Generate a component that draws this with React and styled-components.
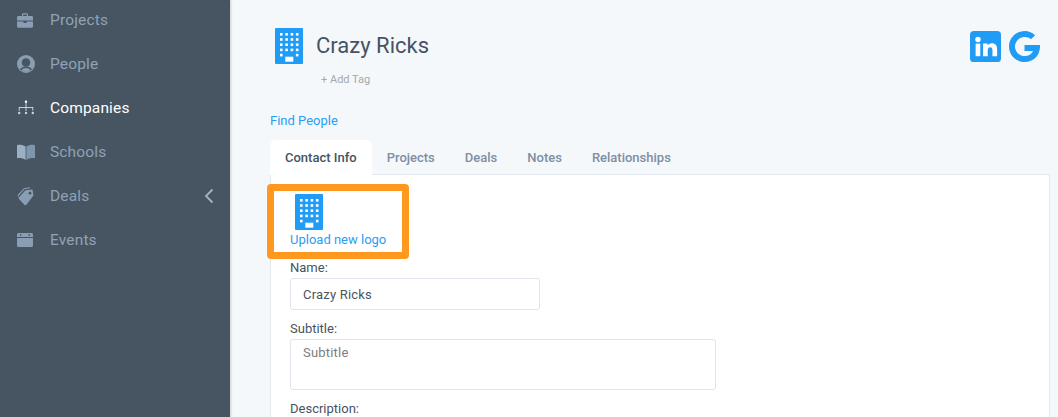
import React from "react";
import styled, { createGlobalStyle } from "styled-components";

const Global = createGlobalStyle`
  html, body { margin: 0; height: 100%; overflow: hidden; background: #f5f8fb; }
  #root { height: 100%; }
  * { box-sizing: border-box; }
`;
const Page = styled.div`
  display: flex; width: 1058px; height: 417px; overflow: hidden;
  font-family: Roboto, "Liberation Sans", sans-serif; position: relative; background: #f5f8fb;
`;
const Sidebar = styled.nav`
  flex: 0 0 230px; background: #475563; box-shadow: 1px 0 2px rgba(70,83,97,.25);
  display: flex; flex-direction: column; height: 417px; overflow: hidden;
`;
const NavList = styled.div`margin-top: -2px; display: flex; flex-direction: column;`;
const NavItem = styled.div`
  height: 44px; display: flex; align-items: center; padding: 0 16px 0 17px;
  font-size: 15.5px; letter-spacing: .15px; color: ${p => p.$active ? "#ffffff" : "#8fa2b6"};
`;
const NavIcon = styled.span`width: 33px; height: 20px; display: flex; align-items: center; flex: none;`;
const NavLabel = styled.span`flex: 1;`;
const Main = styled.main`flex: 1; padding: 28px 0 0 40px; min-width: 0;`;
const Header = styled.header`display: flex; justify-content: space-between; height: 85px; padding-right: 18px;`;
const HeaderLeft = styled.div`display: flex; padding-left: 5px; gap: 13px;`;
const TitleCol = styled.div`display: flex; flex-direction: column;`;
const Title = styled.h1`margin: 0; font-size: 22px; font-weight: 400; color: #465361; line-height: 36px;`;
const AddTag = styled.span`font-size: 11px; color: #a5a8ab; margin: 9px 0 0 5px; line-height: 14px;`;
const Social = styled.div`display: flex; gap: 8px; margin-top: 3px; align-items: flex-start;`;
const FindLink = styled.a`display: block; font-size: 13px; line-height: 16px; color: #2a9df4; margin-bottom: 11px;`;
const Tabs = styled.div`display: flex; height: 34px;`;
const Tab = styled.div`
  height: 35px; padding: 0 15px; display: flex; align-items: center; font-size: 13px; font-weight: 500;
  color: ${p => p.$active ? "#465361" : "#7d8fa3"};
  background: ${p => p.$active ? "#fff" : "transparent"};
  border-radius: 6px 6px 0 0; position: relative; z-index: 1;
`;
const Panel = styled.section`
  background: #fff; border: 1px solid #e3e8ef; border-bottom: 0; margin-right: 8px;
  padding: 19px 19px 0 19px; height: 260px;
`;
const LogoBlock = styled.div`display: flex; flex-direction: column; align-items: flex-start; gap: 2px; height: 66px;`;
const LogoIcon = styled.div`padding-left: 5px; height: 36px;`;
const Upload = styled.a`font-size: 13px; line-height: 16px; color: #2a9df4;`;
const Field = styled.div`display: flex; flex-direction: column; margin-bottom: 11px;`;
const Label = styled.label`font-size: 13px; line-height: 16px; color: #465361; margin-bottom: 2px;`;
const Input = styled.div`
  width: ${p => p.$wide ? "426px" : "250px"}; height: ${p => p.$wide ? "51px" : "32px"};
  border: 1px solid #e0e4ec; border-radius: 3px; padding: ${p => p.$wide ? "5px" : "1px"} 12px 0;
  display: flex; align-items: ${p => p.$wide ? "flex-start" : "center"};
  font-size: 13px; line-height: 16px; letter-spacing: .2px; color: ${p => p.$ph ? "#7d7d7d" : "#4d5560"};
`;
const Highlight = styled.div`
  position: absolute; left: 267px; top: 184px; width: 142px; height: 75px;
  border: 7px solid #ff981f; border-radius: 4px; pointer-events: none;
`;

const Building = () => {
  const dots = [];
  for (let r = 0; r < 5; r++) for (let k = 0; k < 4; k++) {
    if (r === 4 && k > 0 && k < 3) continue;
    dots.push(<rect key={`${r}${k}`} x={5 + k * 5.3} y={5 + r * 5.2} width="2.6" height="2.6" fill="#fff" />);
  }
  return (
    <svg width="28" height="36" viewBox="0 0 28 36">
      <rect width="28" height="36" rx="1" fill="#209cf7" />
      {dots}
      <rect x="10.300" y="28.700" width="8" height="5" fill="#fff" />
    </svg>
  );
};
const c = "#8a9eb3";
const Brief = () => <svg width="16" height="15" viewBox="0 0 16 15"><path d="M5 3V1.600C5 .8 5.700 .3 6.400 .3h3.200c.7 0 1.400.5 1.400 1.300V3h-1.200V1.600H6.200V3z" fill={c}/><path d="M1.500 3h13c.8 0 1.500.6 1.500 1.400V7.500H0V4.400C0 3.600.7 3 1.500 3z" fill={c}/><path d="M0 8.500h6.500V10h3V8.500H16v4.800c0 .8-.7 1.500-1.500 1.500h-13C.7 14.800 0 14.100 0 13.300z" fill={c}/></svg>;
const Person = () => <svg width="18" height="18" viewBox="0 0 18 18"><circle cx="9" cy="9" r="9" fill={c}/><circle cx="9" cy="7.500" r="4.300" fill="#475563"/><path d="M3 14.500c1-2 3.500-3 6-3s5 1 6 3c-1.500 1.500-3.700 2.300-6 2.300S4.500 16 3 14.500z" fill="#475563"/><path d="M4.500 15.500c1-1.800 2.500-2.500 4.500-2.500s3.500.7 4.500 2.500C12 16.500 10.500 17 9 17s-3-.5-4.500-1.500z" fill={c}/></svg>;
const Org = () => <svg width="18" height="16" viewBox="0 0 18 16"><g fill="#fff"><circle cx="9" cy="1.800" r="1.200"/><rect x="8.650" y="3" width=".7" height="8"/><rect x="2" y="7.200" width="14" height=".7"/><rect x="1.800" y="7.200" width=".7" height="3.500"/><rect x="15.500" y="7.200" width=".7" height="3.500"/></g><g fill="#c9d2dc"><circle cx="2.200" cy="13" r="1.200"/><circle cx="9" cy="13" r="1.200"/><circle cx="15.800" cy="13" r="1.200"/></g></svg>;
const Book = () => <svg width="18" height="16" viewBox="0 0 18 16"><path d="M0 1.200C3 .4 6 1 8.600 2.600V16C6 14.200 3 13.800 0 14.200z" fill="#9cb0c4"/><path d="M18 1.200C15 .4 12 1 9.400 2.600V16c2.600-1.800 5.600-2.200 8.600-1.800z" fill="#7f95ab"/></svg>;
const TagIcon = () => <svg width="18" height="19" viewBox="0 0 18 19"><path d="M.5 8 7 1.200 12.500 .3l.8 1-5.800.9L1.600 8.800 2 11z" fill={c}/><path d="M2 10.300 8.500 3.200l7-.8.900 6.100-7 9.300c-.5.600-1.300.6-1.800.1L2 12c-.5-.5-.5-1.200 0-1.700z" fill={c}/><circle cx="13" cy="6.200" r="1.400" fill="#475563"/></svg>;
const Cal = () => <svg width="16" height="14" viewBox="0 0 16 14"><path d="M1.500 0h13c.8 0 1.500.7 1.500 1.500V4H0V1.500C0 .7.700 0 1.500 0z" fill={c}/><rect x="3" y="1.200" width="1.400" height="1.600" fill="#475563"/><rect x="11.600" y="1.200" width="1.400" height="1.600" fill="#475563"/><path d="M0 5h16v7.500c0 .8-.7 1.500-1.500 1.500h-13C.7 14 0 13.300 0 12.500z" fill={c}/></svg>;
const Chevron = () => <svg width="10" height="16" viewBox="0 0 10 16"><path d="M8.500 1.500 2 8l6.500 6.500" fill="none" stroke="#a3b3c4" strokeWidth="1.800"/></svg>;
const LinkedIn = () => <svg width="31" height="31" viewBox="0 0 32 32"><rect width="32" height="32" rx="4" fill="#209cf7"/><g fill="#fff"><circle cx="8.200" cy="8.800" r="2.800"/><rect x="5.800" y="13" width="4.800" height="13"/><path d="M13.500 13h4.600v1.900c.8-1.300 2.300-2.300 4.400-2.300 4 0 5.500 2.500 5.500 6.400V26h-4.800v-6c0-1.900-.5-3.300-2.300-3.300s-2.600 1.400-2.600 3.300v6h-4.800z"/></g></svg>;
const Google = () => <svg width="31" height="31" viewBox="0 0 31 31"><path d="M31 14H15.500v6h8.600c-1.300 3-4.500 5-8.300 5C10.400 25 6 20.800 6 15.500S10.400 6 15.800 6c2.500 0 4.500.8 6.200 2.300l4.100-4.100C23.500 1.700 20 0 15.800 0 7 0 0 6.900 0 15.500S7 31 15.800 31c8.500 0 15.200-6.300 15.200-15.500 0-.5 0-1 0-1.500z" fill="#209cf7"/></svg>;

const nav = [
  ["Projects", <Brief />], ["People", <Person />], ["Companies", <Org />, true],
  ["Schools", <Book />], ["Deals", <TagIcon />, false, true], ["Events", <Cal />],
];

export default function App() {
  return (
    <Page>
      <Global />
      <Sidebar>
        <NavList>
          {nav.map(([label, icon, active, more]) => (
            <NavItem key={label} $active={active}>
              <NavIcon>{icon}</NavIcon>
              <NavLabel>{label}</NavLabel>
              {more && <Chevron />}
            </NavItem>
          ))}
        </NavList>
      </Sidebar>
      <Main>
        <Header>
          <HeaderLeft>
            <Building />
            <TitleCol>
              <Title>Crazy Ricks</Title>
              <AddTag>+ Add Tag</AddTag>
            </TitleCol>
          </HeaderLeft>
          <Social><LinkedIn /><Google /></Social>
        </Header>
        <FindLink>Find People</FindLink>
        <Tabs>
          <Tab $active>Contact Info</Tab>
          <Tab>Projects</Tab>
          <Tab>Deals</Tab>
          <Tab>Notes</Tab>
          <Tab>Relationships</Tab>
        </Tabs>
        <Panel>
          <LogoBlock>
            <LogoIcon><Building /></LogoIcon>
            <Upload>Upload new logo</Upload>
          </LogoBlock>
          <Field><Label>Name:</Label><Input>Crazy Ricks</Input></Field>
          <Field><Label>Subtitle:</Label><Input $wide $ph>Subtitle</Input></Field>
          <Field><Label>Description:</Label></Field>
        </Panel>
      </Main>
      <Highlight />
    </Page>
  );
}
